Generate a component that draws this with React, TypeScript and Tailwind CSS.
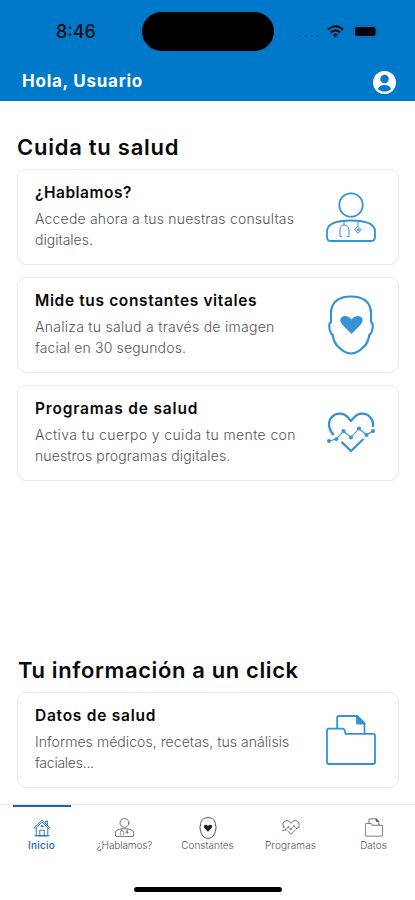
import type { ReactNode } from 'react';

type IconProps = { className?: string; small?: boolean };

function DoctorIcon({ className, small }: IconProps) {
  return (
    <svg viewBox="0 0 50 50" className={className} fill="none" stroke="currentColor" strokeWidth={small ? 2.2 : 1.8} strokeLinecap="round" strokeLinejoin="round">
      <circle cx="25" cy="13" r="11.7" />
      <path d="M1 45V39.500C1 31 12 28.500 25 28.500S49 31 49 39.500V45Q49 49 45 49H5Q1 49 1 45Z" />
      <g strokeWidth={small ? 1.6 : 1}>
        <path d="M18 29v4M15.500 44.500H14V38Q14 33 18.200 33T23 38V44.500H21M32 29v5M32 34.500l3.300 3.300-3.300 3.300-3.300-3.300Z" />
        <circle cx="32" cy="37.800" r="1" />
      </g>
    </svg>
  );
}

function FaceIcon({ className }: IconProps) {
  return (
    <svg viewBox="0 0 46 60" className={className} fill="none" stroke="currentColor" strokeLinejoin="round">
      <path d="M3 27V18C3 7 11 1.500 23 1.500S43 7 43 18V27Q45.300 28.500 44.700 32Q44.200 38 41.300 40C40.500 46 39 49 35.500 52Q29 58.500 23 58.500T10.500 52C7 49 5.500 46 4.700 40Q1.800 38 1.300 32Q.7 28.500 3 27Z" strokeWidth="2.2" />
      <path d="M23.500 39 14.200 29.500C10.500 25 13 21 17 21Q21 21 23.500 24.500Q26 21 30 21C34 21 36.500 25 32.800 29.500Z" fill="currentColor" stroke="none" />
    </svg>
  );
}

function SmallFaceIcon({ className }: IconProps) {
  return (
    <svg viewBox="0 0 18 22" className={className} fill="none" stroke="currentColor" strokeWidth="1">
      <path d="M9 .7C4 .7 1.700 3.500 1.500 8Q.4 10 1.300 13C2 18 5 21.300 9 21.300S16 18 16.700 13Q17.600 10 16.500 8C16.300 3.500 14 .7 9 .7Z" />
      <path d="M9 14.800 5.300 11C3.800 8.500 7 6.500 9 9C11 6.500 14.200 8.500 12.700 11Z" fill="#222" stroke="none" />
    </svg>
  );
}

function HeartIcon({ className, small }: IconProps) {
  return (
    <svg viewBox="0 0 48 41" className={className} fill="none" stroke="currentColor" strokeWidth="2.300" strokeLinejoin="round">
      <path d="M6.800 23C1.500 18 .5 10 4.500 5.500C9.500 0 17 1 20.500 5L24 9L27.500 5C31 1 38.500 0 43.500 5.500Q46.700 9.500 46 15M14.500 29.800 24 39 36.500 27" />
      <path d="M2 29 9.500 27 16.500 19 24 25.500 32 16.500 39.500 23 46 19" strokeWidth={small ? 1.6 : 1.1} />
      <g fill="currentColor" stroke="none">
        <circle cx="2" cy="29" r="2" /><circle cx="9.500" cy="27" r="2" /><circle cx="16.500" cy="19" r="2" />
        <circle cx="24" cy="25.500" r="2" /><circle cx="32" cy="16.500" r="2" /><circle cx="39.500" cy="23" r="2" /><circle cx="46" cy="19" r="2" />
      </g>
    </svg>
  );
}

function FolderIcon({ className, small }: IconProps) {
  return (
    <svg viewBox="0 0 50 50" className={className} fill="none" stroke="currentColor" strokeWidth={small ? 2.2 : 1.8} strokeLinejoin="round">
      <path d="M1 15.500Q1 13.700 2.800 13.700H16.500Q18.200 13.700 18.700 15.500L19.500 18.800H47.200Q49 18.800 49 20.600V47.200Q49 49 47.200 49H2.800Q1 49 1 47.200Z" />
      <path d="M11.200 13.700V2.800Q11.200 1 13 1H31L38.500 8.500V18.800" />
      <path d="M31 1V8.500H38.500Z" fill="currentColor" />
    </svg>
  );
}

function HomeIcon({ className }: IconProps) {
  return (
    <svg viewBox="0 0 18 18" className={className} fill="none" stroke="currentColor" strokeWidth=".9" strokeLinejoin="round" strokeLinecap="round">
      <path d="M1 9 9 1.300 17 9M2.200 9.500 9 3.200 15.800 9.500M12.800 4.500V2h1.600v4M3.200 9.500V16.800H14.800V9.500M6.800 16.800V11.200H11.200V16.800M1.800 16.800H16.200" />
      <circle cx="9" cy="7.300" r=".8" fill="currentColor" />
    </svg>
  );
}

function Card({ title, titleClass, lines, icon }: { title: string; titleClass: string; lines: [string, string][]; icon: ReactNode }) {
  return (
    <article className="flex h-[96px] rounded-[9px] border-[1.5px] border-[#e8e8e8] bg-white pl-[17px]">
      <div className="min-w-0 flex-1 whitespace-nowrap pt-[12px]">
        <h2 className={`text-[15.5px] font-semibold leading-[22px] text-[#080808] ${titleClass}`}>{title}</h2>
        <p className="mt-[4px] text-[14px] font-light leading-[21px] text-[#555]">
          {lines.map(([text, cls]) => (
            <span key={text} className={`block ${cls}`}>{text}</span>
          ))}
        </p>
      </div>
      <div className="flex w-[95px] items-center justify-center text-[#3492d5]">{icon}</div>
    </article>
  );
}

const tabs = [
  { label: 'Inicio', cls: 'tracking-[0.2px] font-medium', icon: <HomeIcon className="h-[18px] w-[18px]" /> },
  { label: '¿Hablamos?', cls: 'tracking-[-0.1px]', icon: <DoctorIcon small className="h-[19px] w-[19px]" /> },
  { label: 'Constantes', cls: 'tracking-[0px]', icon: <SmallFaceIcon className="h-[22px] w-[18px]" /> },
  { label: 'Programas', cls: 'tracking-[0.1px]', icon: <HeartIcon small className="h-[15px] w-[18px]" /> },
  { label: 'Datos', cls: 'tracking-[0px]', icon: <FolderIcon small className="h-[19px] w-[18px]" /> },
];

export default function App() {
  return (
    <div className="flex h-[900px] w-[415px] flex-col overflow-hidden bg-white font-['Inter',sans-serif]">
      <header className="h-[101px] shrink-0 bg-[#0079cb]">
        <div className="flex h-[63px] items-center pl-[56px]">
          <span className="w-[86px] text-[18px] font-medium tracking-[0px] text-[#07121b]">8:46</span>
          <div className="h-[39px] w-[132px] rounded-full bg-black" />
          <div className="ml-[24px] mt-[9px] flex gap-[3.500px]">
            <i className="size-[2.500px] rounded-full bg-[#0a5f9d]" />
            <i className="size-[2.500px] rounded-full bg-[#0a5f9d]" />
            <i className="size-[2.500px] rounded-full bg-[#0a5f9d]" />
            <i className="size-[2.500px] rounded-full bg-[#0a5f9d]" />
          </div>
          <svg viewBox="0 0 17 13" className="ml-[8px] h-[13px] w-[17px]" fill="none" stroke="#07121b" strokeWidth="2.200">
            <path d="M1 4.600Q8.500-2.300 16 4.600M3.700 7.600Q8.500 3 13.300 7.600" />
            <path d="M8.500 12.800 5.700 9.800Q8.500 7.200 11.300 9.800Z" fill="#07121b" stroke="none" />
          </svg>
          <svg viewBox="0 0 27 13" className="ml-[9px] h-[13px] w-[27px]">
            <rect x=".5" y=".5" width="23.500" height="12" rx="3.500" fill="none" stroke="#086bb0" />
            <rect x="2" y="2" width="20.500" height="9" rx="2" fill="#00060c" />
            <path d="M25 4.500Q27 6.500 25 8.500Z" fill="#086bb0" />
          </svg>
        </div>
        <div className="flex h-[38px] items-center justify-between pl-[22px] pr-[19px]">
          <h1 className="text-[17px] font-bold tracking-[0.75px] text-white">Hola, Usuario</h1>
          <svg viewBox="0 0 24 24" className="size-[23px]">
            <circle cx="12" cy="12" r="12" fill="white" />
            <circle cx="12" cy="8.300" r="4.400" fill="#0079cb" />
            <path d="M5 18.200Q7.500 14.700 12 14.700T19 18.200Q16.500 21.500 12 21.500T5 18.200Z" fill="#0079cb" />
          </svg>
        </div>
      </header>

      <main className="flex flex-1 flex-col pl-[17px] pr-4">
        <section className="pt-[31px]">
          <h2 className="mb-[7px] whitespace-nowrap text-[22px] font-semibold leading-[30px] tracking-[0.75px] text-[#090909]">Cuida tu salud</h2>
          <div className="flex flex-col gap-3">
            <Card title="¿Hablamos?" titleClass="tracking-[0.5px]" lines={[['Accede ahora a tus nuestras consultas', 'tracking-[0.19px]'], ['digitales.', 'tracking-[0px]']]} icon={<DoctorIcon className="size-[50px]" />} />
            <Card title="Mide tus constantes vitales" titleClass="tracking-[0.63px]" lines={[['Analiza tu salud a través de imagen', 'tracking-[0.28px]'], ['facial en 30 segundos.', 'tracking-[0.15px]']]} icon={<FaceIcon className="h-[60px] w-[46px]" />} />
            <Card title="Programas de salud" titleClass="tracking-[0.82px]" lines={[['Activa tu cuerpo y cuida tu mente con', 'tracking-[0.38px]'], ['nuestros programas digitales.', 'tracking-[0.12px]']]} icon={<HeartIcon className="mb-[2px] h-[41px] w-[48px]" />} />
          </div>
        </section>
        <section className="mt-[174px]">
          <h2 className="mb-[7px] whitespace-nowrap pl-[1px] text-[22px] font-semibold leading-[30px] tracking-[0.62px] text-[#090909]">Tu información a un click</h2>
          <Card title="Datos de salud" titleClass="tracking-[0.75px]" lines={[['Informes médicos, recetas, tus análisis', 'tracking-[0.06px]'], ['faciales...', 'tracking-[-0.25px]']]} icon={<FolderIcon className="size-[50px]" />} />
        </section>
      </main>

      <footer className="flex h-[96px] shrink-0 flex-col items-center border-t border-[#e9e9e9]">
        <nav className="grid h-[81px] w-full grid-cols-5">
          {tabs.map(({ label, cls, icon }, i) => (
            <div key={label} className={`flex flex-col items-center ${i === 0 ? 'text-[#1868bd]' : 'text-[#555]'}`}>
              <div className={`h-[2px] w-[58px] ${i === 0 ? 'bg-[#1266c3]' : ''}`} />
              <div className="mt-[9px] flex h-[23px] items-center justify-center">{icon}</div>
              <span className={`-mt-[1px] text-[10px] leading-[14px] ${i === 0 ? '' : 'font-light'} ${cls}`}>{label}</span>
            </div>
          ))}
        </nav>
        <div className="mt-[1px] h-[5px] w-[148px] rounded-full bg-black" />
      </footer>
    </div>
  );
}
